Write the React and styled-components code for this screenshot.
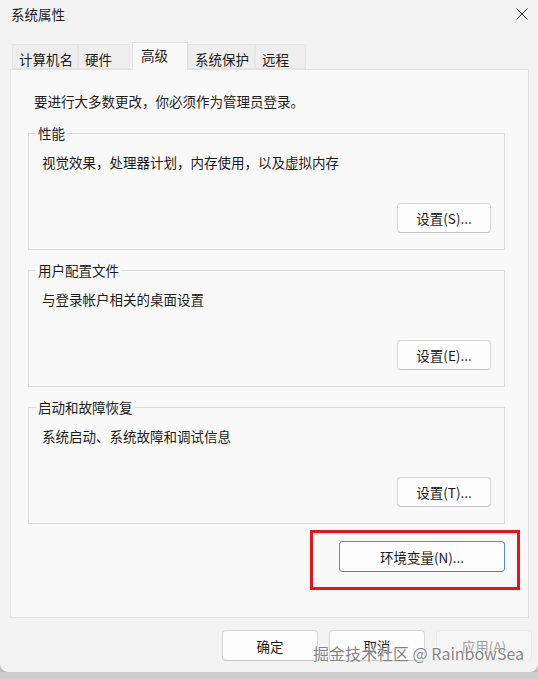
import React from 'react';
import styled, { createGlobalStyle } from 'styled-components';

const GlobalStyle = createGlobalStyle`
  html, body {
    margin: 0;
    padding: 0;
    background: #cfcfcf;
  }
  body {
    font-family: "Noto Sans CJK SC", "Noto Sans", sans-serif;
    font-size: 13.5px;
    color: #1b1b1b;
  }
  * {
    box-sizing: border-box;
  }
`;

const Window = styled.div`
  position: relative;
  width: 538px;
  height: 672px;
  background: #f3f3f3;
  border-radius: 0 0 8px 8px;
  box-shadow: 0 2px 5px rgba(0, 0, 0, 0.2);
  display: flex;
  flex-direction: column;
`;

const TitleBar = styled.div`
  height: 28px;
  display: flex;
  align-items: center;
  justify-content: space-between;
  padding: 0 10px 0 11px;
  font-size: 13.5px;
  line-height: 18px;
`;

const CloseButton = styled.div`
  width: 12px;
  height: 12px;
  display: flex;
`;

const TabRow = styled.div`
  display: flex;
  align-items: flex-end;
  height: 27px;
  margin-top: 14px;
  padding-left: 12px;
`;

const Tab = styled.div`
  width: ${(p) => p.$w}px;
  height: ${(p) => (p.$active ? 28 : 25)}px;
  margin-left: ${(p) => (p.$active ? 2 : 0)}px;
  margin-bottom: ${(p) => (p.$active ? -1 : 0)}px;
  padding: ${(p) => (p.$active ? '3px 0 0 8px' : '5px 0 0 6px')};
  background: ${(p) => (p.$active ? '#f9f9f9' : '#eeeeee')};
  border: 1px solid ${(p) => (p.$active ? '#e2e2e2' : '#e6e6e6')};
  border-bottom: ${(p) => (p.$active ? 'none' : '1px solid #e3e3e3')};
  position: relative;
  z-index: ${(p) => (p.$active ? 1 : 0)};
  font-size: 13.5px;
  line-height: 18px;
  white-space: nowrap;
`;

const Panel = styled.div`
  margin-left: 10px;
  width: 519px;
  height: 549px;
  background: #f9f9f9;
  border: 1px solid #e3e3e3;
  padding: 21px 23px 0 17px;
  display: flex;
  flex-direction: column;
`;

const Notice = styled.div`
  margin-left: 6px;
  line-height: 20px;
`;

const Groups = styled.div`
  margin-top: 13px;
  display: flex;
  flex-direction: column;
  gap: 11px;
`;

const Group = styled.fieldset`
  margin: 0;
  padding: 0 13px 16px 13px;
  border: 1px solid #dddddd;
  min-width: 0;
`;

const Legend = styled.legend`
  margin-left: -6px;
  padding: 0 2px;
  font-size: 13.5px;
  line-height: 18px;
`;

const Description = styled.div`
  margin-top: 10px;
  line-height: 20px;
`;

const ButtonRow = styled.div`
  display: flex;
  justify-content: flex-end;
  margin-top: 31px;
`;

const Button = styled.button`
  width: ${(p) => p.$w || 94}px;
  height: ${(p) => p.$h || 30}px;
  padding: 0;
  background: ${(p) => (p.$disabled ? '#f6f6f6' : '#fdfdfd')};
  border: 1px solid ${(p) => (p.$disabled ? '#ebebeb' : p.$focus ? '#4b8fd6' : '#d6d6d6')};
  border-bottom-color: ${(p) => (p.$disabled ? '#ebebeb' : p.$focus ? '#3f84cf' : '#c4c4c4')};
  border-radius: 4px;
  color: ${(p) => (p.$disabled ? '#a2a2a2' : '#1b1b1b')};
  font-family: "Noto Sans CJK SC", "Noto Sans", sans-serif;
  font-size: 13.5px;
  line-height: 18px;
`;

const Highlight = styled.div`
  align-self: flex-end;
  margin-top: 6px;
  margin-right: -15px;
  width: 210px;
  height: 60px;
  border: 3px solid #e8141b;
  padding: 8px 12px 0 26px;
`;

const Footer = styled.div`
  display: flex;
  justify-content: flex-end;
  gap: 11px;
  padding: 12px 6px 0 0;
`;

const Watermark = styled.div`
  position: absolute;
  left: 313px;
  top: 643px;
  font-size: 16px;
  line-height: 20px;
  color: rgba(100, 100, 100, 0.8);
  text-shadow: 0 0 1px #ffffff, 0 0 2px #ffffff;
  white-space: nowrap;
  pointer-events: none;
`;

const tabs = [
  { label: '计算机名', w: 66 },
  { label: '硬件', w: 52 },
  { label: '高级', w: 56, active: true },
  { label: '系统保护', w: 67 },
  { label: '远程', w: 51 },
];

const groups = [
  { title: '性能', text: '视觉效果，处理器计划，内存使用，以及虚拟内存', button: '设置(S)...' },
  { title: '用户配置文件', text: '与登录帐户相关的桌面设置', button: '设置(E)...' },
  { title: '启动和故障恢复', text: '系统启动、系统故障和调试信息', button: '设置(T)...' },
];

export default function App() {
  return (
    <>
      <GlobalStyle />
      <Window>
        <TitleBar>
          <span>系统属性</span>
          <CloseButton>
            <svg width="12" height="12" viewBox="0 0 12 12">
              <path d="M0.5 0.5 L11.5 11.5 M11.5 0.5 L0.5 11.5" stroke="#2a2a2a" strokeWidth="1" fill="none" />
            </svg>
          </CloseButton>
        </TitleBar>
        <TabRow>
          {tabs.map((t) => (
            <Tab key={t.label} $w={t.w} $active={t.active}>
              {t.label}
            </Tab>
          ))}
        </TabRow>
        <Panel>
          <Notice>要进行大多数更改，你必须作为管理员登录。</Notice>
          <Groups>
            {groups.map((g) => (
              <Group key={g.title}>
                <Legend>{g.title}</Legend>
                <Description>{g.text}</Description>
                <ButtonRow>
                  <Button>{g.button}</Button>
                </ButtonRow>
              </Group>
            ))}
          </Groups>
          <Highlight>
            <Button $w={166} $h={31} $focus>环境变量(N)...</Button>
          </Highlight>
        </Panel>
        <Footer>
          <Button $w={96} $h={31}>确定</Button>
          <Button $w={96} $h={31}>取消</Button>
          <Button $w={96} $h={31} $disabled>应用(A)</Button>
        </Footer>
        <Watermark>掘金技术社区 @ RainbowSea</Watermark>
      </Window>
    </>
  );
}
